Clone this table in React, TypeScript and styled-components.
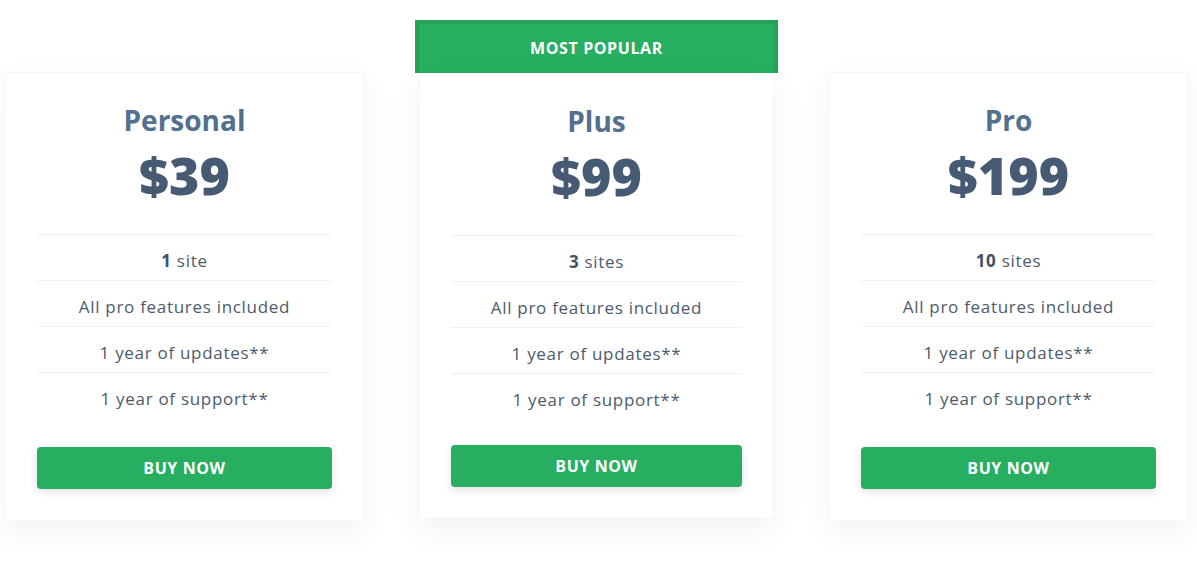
import React from 'react';
import styled, { createGlobalStyle } from 'styled-components';

const GlobalStyle = createGlobalStyle`
	html, body {
		margin: 0;
		padding: 0;
		background: #ffffff;
	}
	body {
		font-family: 'Open Sans', 'Noto Sans', Arial, sans-serif;
	}
`;

type Plan = {
	name: string;
	price: string;
	sites: number;
	featured?: boolean;
};

const PLANS: Plan[] = [
	{ name: 'Personal', price: '$39', sites: 1 },
	{ name: 'Plus', price: '$99', sites: 3, featured: true },
	{ name: 'Pro', price: '$199', sites: 10 },
];

const FEATURES = ['All pro features included', '1 year of updates**', '1 year of support**'];

const PlanCard = ({ plan }: { plan: Plan }) => {
	const body = (
		<Card $featured={plan.featured}>
			<Title>{plan.name}</Title>
			<Price>{plan.price}</Price>
			<FeatureList>
				<Feature>
					<strong>{plan.sites}</strong> {plan.sites === 1 ? 'site' : 'sites'}
				</Feature>
				{FEATURES.map(f => (
					<Feature key={f}>{f}</Feature>
				))}
			</FeatureList>
			<BuyButton $featured={plan.featured}>BUY NOW</BuyButton>
		</Card>
	);

	if (!plan.featured) return <Column>{body}</Column>;

	return (
		<FeaturedColumn>
			<Ribbon>MOST POPULAR</Ribbon>
			{body}
		</FeaturedColumn>
	);
};

const App = () => (
	<>
		<GlobalStyle />
		<Page>
			{PLANS.map(plan => (
				<PlanCard key={plan.name} plan={plan} />
			))}
		</Page>
	</>
);

const Page = styled.div`
	display: flex;
	align-items: flex-start;
	gap: 51px;
	padding: 20px 0 0 5px;
	min-height: 545px;
`;

const Column = styled.div`
	width: 359px;
	margin-top: 52px;
	display: flex;
	flex-direction: column;
`;

const FeaturedColumn = styled.div`
	width: 363px;
	display: flex;
	flex-direction: column;
	align-items: center;
`;

const Ribbon = styled.div`
	box-sizing: border-box;
	width: 100%;
	height: 53px;
	padding-bottom: 1px;
	background: #27ae60;
	border: 4px solid #25a25a;
	border-bottom: none;
	color: #ffffff;
	font-family: 'Open Sans', Arial, sans-serif;
	font-weight: 700;
	font-size: 16px;
	display: flex;
	align-items: center;
	justify-content: center;
	letter-spacing: 0.6px;
`;

const Card = styled.div<{ $featured?: boolean }>`
	box-sizing: border-box;
	width: ${p => (p.$featured ? '355px' : '100%')};
	background: #ffffff;
	border: 1px solid #f5f6f8;
	${p => (p.$featured ? 'border-top: none;' : '')}
	box-shadow: 0 10px 30px rgba(40, 50, 70, 0.06);
	padding: ${p => (p.$featured ? '31px' : '30px')} 31px 31px;
	display: flex;
	flex-direction: column;
	align-items: stretch;
	text-align: center;
`;

const Title = styled.div`
	font-family: 'Open Sans', Arial, sans-serif;
	font-weight: 700;
	font-size: 28px;
	line-height: 34px;
	color: #54708f;
`;

const Price = styled.div`
	font-family: 'Open Sans', Arial, sans-serif;
	font-weight: 800;
	font-size: 52px;
	line-height: 54px;
	margin-top: 11px;
	color: #465b73;
`;

const FeatureList = styled.div`
	margin-top: 32px;
	display: flex;
	flex-direction: column;
`;

const Feature = styled.div`
	border-top: 1px solid #f0f1f3;
	padding: 14px 0 8px;
	line-height: 23px;
	font-family: 'Open Sans', Arial, sans-serif;
	font-size: 17px;
	font-weight: 400;
	letter-spacing: 0.7px;
	color: #4c5b6c;

	strong {
		font-weight: 700;
		color: #3f5166;
	}
`;

const BuyButton = styled.button<{ $featured?: boolean }>`
	margin-top: ${p => (p.$featured ? '26px' : '29px')};
	height: 42px;
	border: none;
	border-radius: 4px;
	background: #27ae60;
	color: #ffffff;
	font-family: 'Open Sans', Arial, sans-serif;
	font-weight: 700;
	font-size: 16px;
	letter-spacing: 0.6px;
	box-shadow: 0 3px 8px rgba(0, 0, 0, 0.12);
	cursor: pointer;
`;

export default App;
